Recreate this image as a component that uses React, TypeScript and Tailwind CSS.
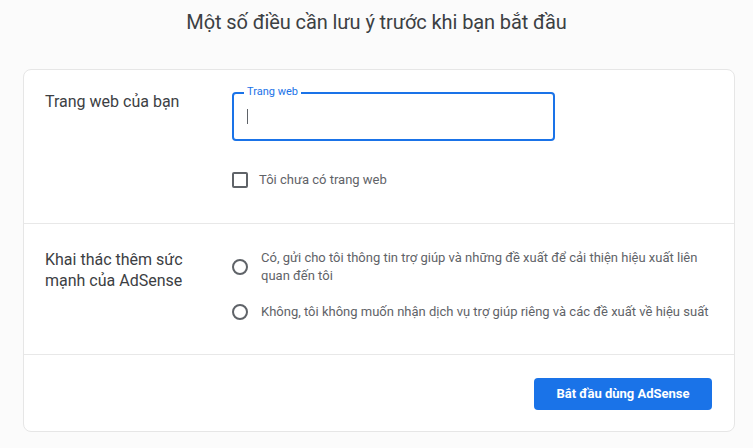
import React from "react";

export default function App() {
  return (
    <div
      className="min-h-[448px] w-full bg-[#fbfbfb] flex flex-col"
      style={{ fontFamily: "Roboto, 'Noto Sans', Arial, sans-serif" }}
    >
      <h1 className="mt-[8px] h-[28px] text-center text-[20px] leading-[28px] text-[#3c4043] font-normal tracking-[-0.1px]">
        Một số điều cần lưu ý trước khi bạn bắt đầu
      </h1>
      <div className="mt-[33px] ml-[23px] w-[712px] bg-white border border-[#e6e6e6] rounded-[8px] flex flex-col">
        {/* Section 1 */}
        <div className="flex pt-[22px] pb-[35px]">
          <div className="w-[208px] pl-[21px] text-[16px] leading-[20px] text-[#3c4043]">
            Trang web của bạn
          </div>
          <div className="flex flex-col">
            <div className="relative w-[323px] h-[49px] border-2 border-[#1a73e8] rounded-[4px] flex items-center pl-[13px]">
              <span className="absolute -top-[8px] left-[10px] bg-white px-[3px] text-[11px] leading-[12px] text-[#1a73e8]">
                Trang web
              </span>
              <span className="w-[1px] h-[15px] bg-[#5f6368]" />
            </div>
            <label className="mt-[31px] flex items-center gap-[11px]">
              <span className="w-[16px] h-[16px] border-2 border-[#5f6368] rounded-[2px]" />
              <span className="text-[13px] leading-[16px] text-[#5f6368]">Tôi chưa có trang web</span>
            </label>
          </div>
        </div>
        <div className="h-px bg-[#e8e8e8]" />
        {/* Section 2 */}
        <div className="flex pt-[25px] pb-[33px]">
          <div className="w-[208px] pl-[21px]">
            <div className="w-[160px] text-[16px] leading-[21px] text-[#3c4043]">
              Khai thác thêm sức mạnh của AdSense
            </div>
          </div>
          <div className="flex flex-col gap-[18px]">
            <div className="flex items-center gap-[13px]">
              <span className="shrink-0 w-[16px] h-[16px] border-2 border-[#5f6368] rounded-full" />
              <span className="w-[452px] text-[13px] leading-[18px] text-[#5f6368]">
                Có, gửi cho tôi thông tin trợ giúp và những đề xuất để cải thiện hiệu xuất liên quan đến tôi
              </span>
            </div>
            <div className="flex items-center gap-[13px]">
              <span className="shrink-0 w-[16px] h-[16px] border-2 border-[#5f6368] rounded-full" />
              <span className="w-[452px] text-[13px] leading-[18px] text-[#5f6368]">
                Không, tôi không muốn nhận dịch vụ trợ giúp riêng và các đề xuất về hiệu suất
              </span>
            </div>
          </div>
        </div>
        <div className="h-px bg-[#e8e8e8]" />
        {/* Footer */}
        <div className="flex justify-end pt-[23px] pb-[21px] pr-[22px]">
          <button className="w-[178px] h-[32px] rounded-[4px] bg-[#1a73e8] text-white text-[13px] font-bold">
            Bắt đầu dùng AdSense
          </button>
        </div>
      </div>
    </div>
  );
}
